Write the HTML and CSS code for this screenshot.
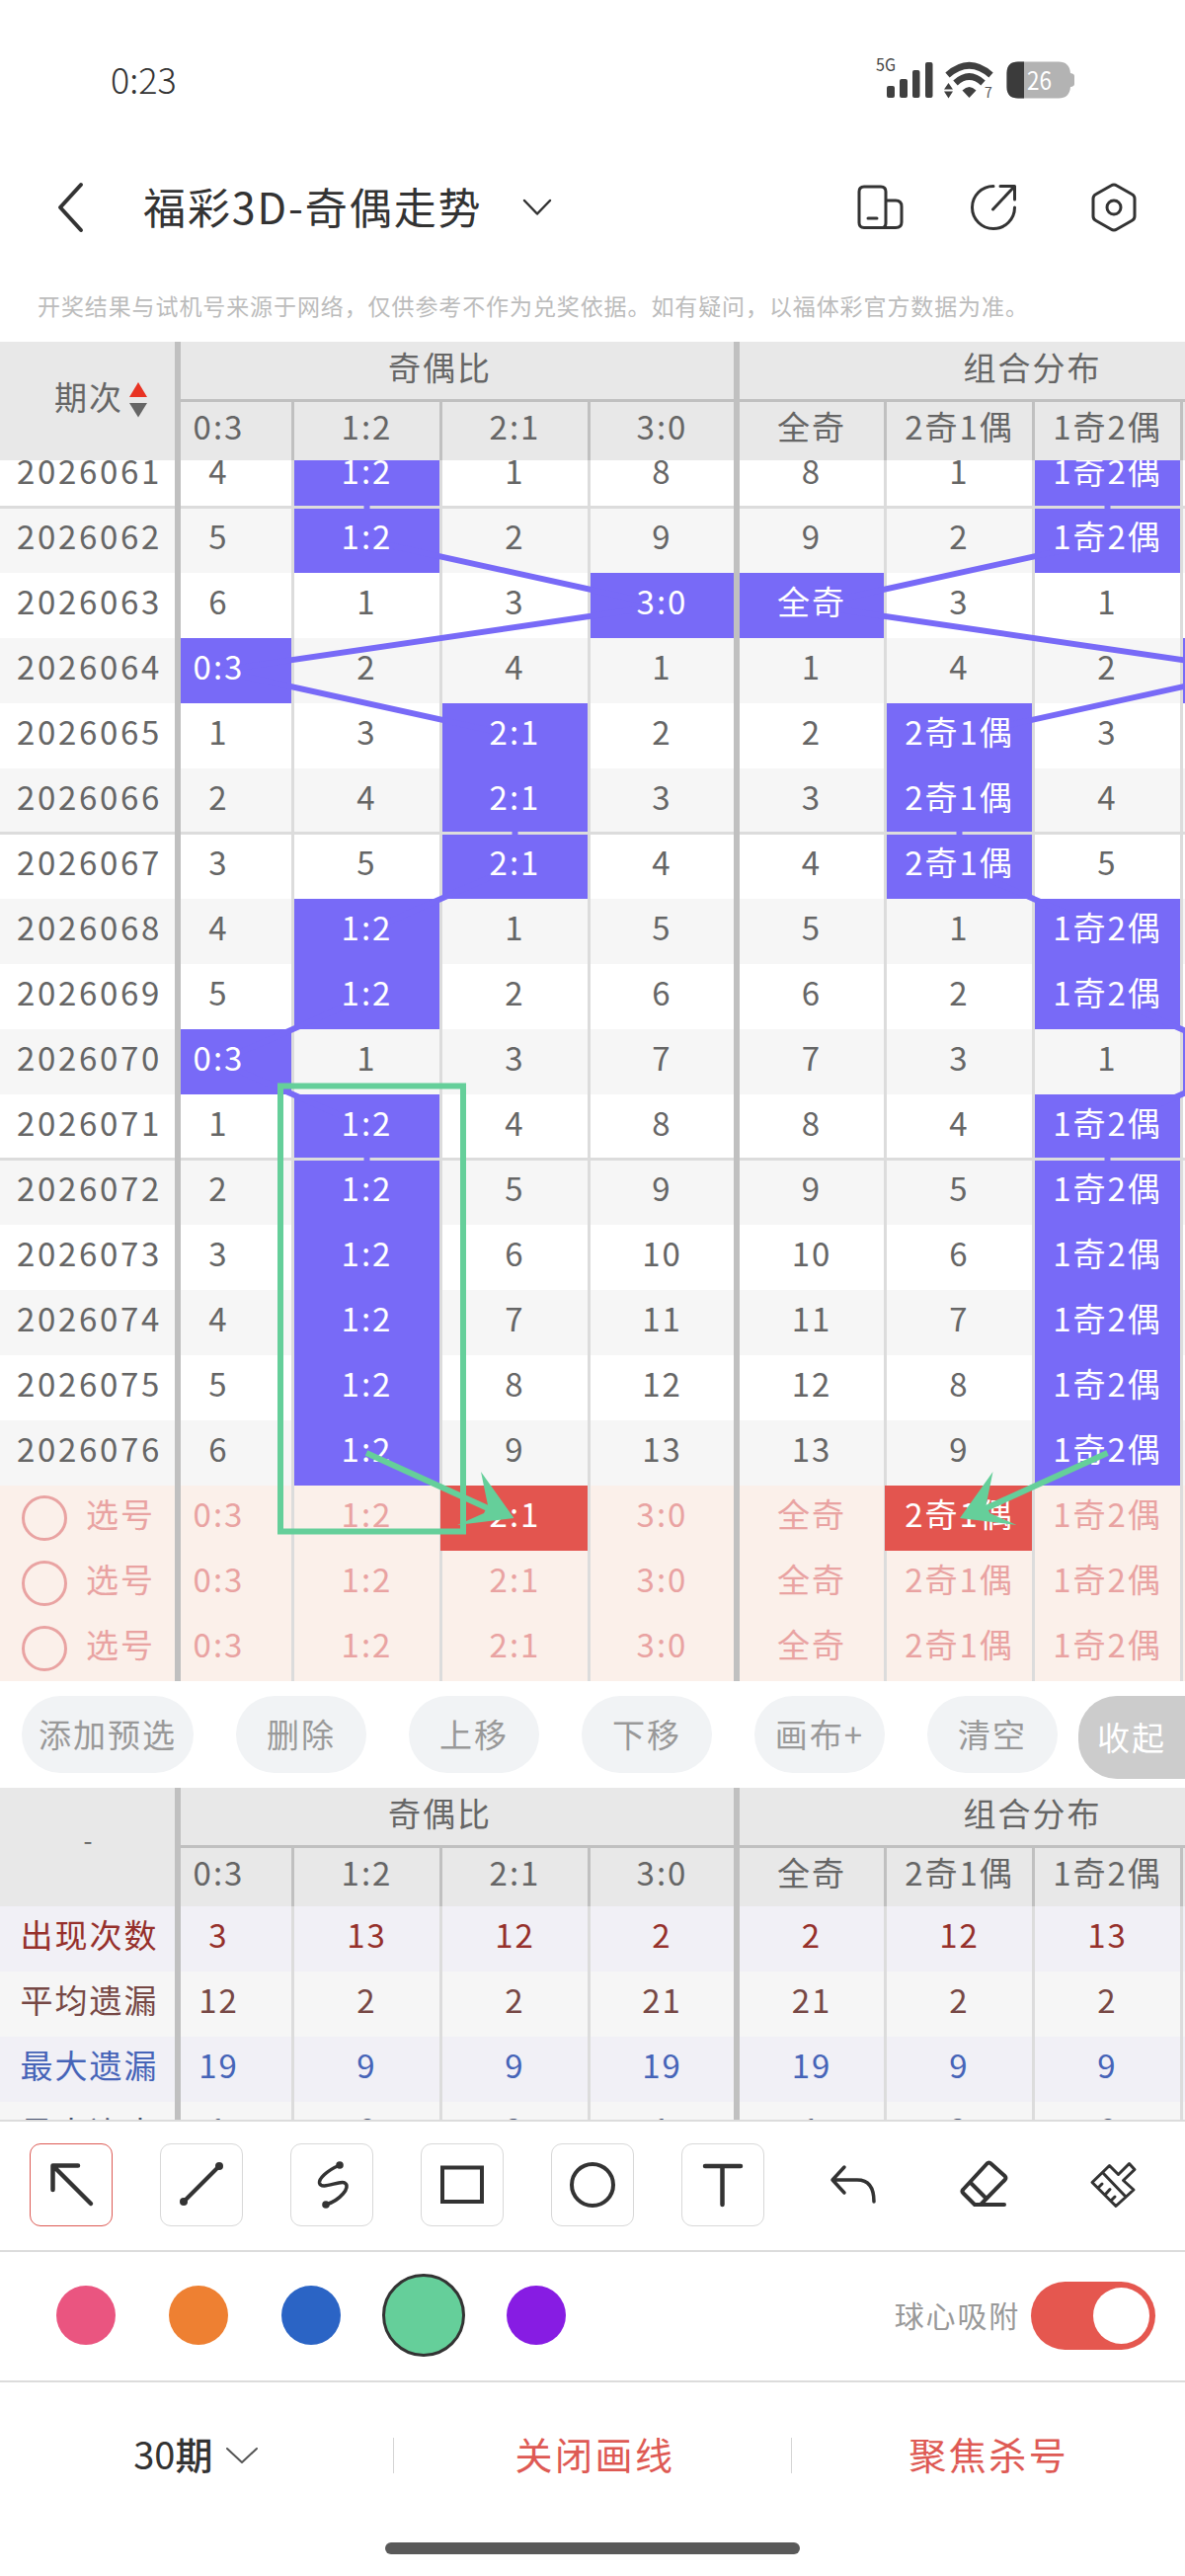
FILE: index.html
```html
<!DOCTYPE html>
<html lang="zh-CN">
<head>
    <meta charset="UTF-8">
    <meta name="viewport" content="width=device-width, initial-scale=1.0">
    <title>福彩3D-奇偶走势</title>
    <link rel="stylesheet" href="styles.css">
</head>
<body>
    <div class="status-bar">
        <span class="clock">0:23</span>
        <svg class="status-icons" width="210" height="60" viewBox="880 51 210 60">
            <text x="887" y="72" font-size="17" textLength="20" lengthAdjust="spacingAndGlyphs" fill="#444">5G</text>
            <g fill="#404040">
                <rect x="898" y="87" width="8" height="12" rx="2"/>
                <rect x="911" y="80" width="8" height="19" rx="2"/>
                <rect x="924" y="71" width="7.5" height="28" rx="2"/>
                <rect x="937" y="63" width="7.5" height="36" rx="2"/>
                <path d="M981.500 99 L974.500 91.500 Q981.500 84.500 988.500 91.500Z"/>
                <path d="M956 90.500 L960.500 84 L965 90.500Z M956 92.500 H965 L960.500 99.500Z"/>
            </g>
            <g fill="none" stroke="#404040" stroke-width="6.500" stroke-linecap="butt">
                <path d="M959.500 76 Q981.500 56.500 1003.500 76"/>
                <path d="M967.500 84 Q981.500 71 995.500 84"/>
            </g>
            <text x="997" y="99" font-size="14" fill="#555">7</text>
            <path fill="#b3b3b3" d="M1031 62.500 H1072 Q1083 62.500 1084 74 Q1088 74.500 1088 77 V85 Q1088 87.500 1084 88 Q1083 99.500 1072 99.500 H1031 Q1019.500 99.500 1019.500 88 V74 Q1019.500 62.500 1031 62.500Z"/>
            <path fill="#3b3b3b" d="M1037 62.500 V99.500 H1031 Q1019.500 99.500 1019.500 88 V74 Q1019.500 62.500 1031 62.500Z"/>
            <text x="1040" y="90.500" font-size="25" textLength="25" lengthAdjust="spacingAndGlyphs" fill="#fff">26</text>
        </svg>
    </div>

    <div class="title-bar">
        <svg class="back" width="28" height="52" viewBox="0 0 28 52"><path d="M25 3 L4 26 L25 49"/></svg>
        <h1>福彩3D-奇偶走势</h1>
        <svg class="arrow" width="30" height="18" viewBox="0 0 30 18"><path d="M2 2 L15 15.500 L28 2"/></svg>
        <div class="title-actions">
            <svg width="50" height="50" viewBox="0 0 50 50">
                <path d="M8 4 H25 Q30 4 30 9 V41 Q30 45 27 45.500 H8 Q3 45.500 3 40.500 V9 Q3 4 8 4Z M30 18 H40 Q46 18 46 24 V40 Q46 45.500 40 45.500 H26"/>
                <path d="M12 36 H21"/>
            </svg>
            <svg width="50" height="50" viewBox="0 0 50 50">
                <path d="M25 3.500 A21.500 21.500 0 1 0 46.500 25"/>
                <path d="M32 3.500 H46.500 V17 M46 4 L24.500 27"/>
            </svg>
            <svg width="50" height="50" viewBox="0 0 50 50">
                <path d="M22 3 Q25 1 28 3 L43 11.500 Q46 13 46 16 V34 Q46 37 43 38.500 L28 47 Q25 49 22 47 L7 38.500 Q4 37 4 34 V16 Q4 13 7 11.500Z"/>
                <circle cx="25" cy="25" r="7"/>
            </svg>
        </div>
    </div>
    <p class="notice">开奖结果与试机号来源于网络，仅供参考不作为兑奖依据。如有疑问，以福体彩官方数据为准。</p>

    <section class="chart">
        <div class="table">
            <div class="side">
                <div class="side-head">期次
                    <svg width="18" height="36" viewBox="0 0 18 36"><path fill="#e83323" d="M9 0 L18 15 H0Z"/><path fill="#666" d="M0 21 H18 L9 35.500Z"/></svg>
                </div>
                <div class="viewport"><div class="rows" id="periods"></div></div>
                <div class="picks">
                    <div class="pick"><i></i>选号</div>
                    <div class="pick"><i></i>选号</div>
                    <div class="pick"><i></i>选号</div>
                </div>
            </div>
            <div class="pane">
                <div class="sheet">
                    <div class="head"></div>
                    <div class="viewport">
                        <div class="rows" id="trend"></div>
                    </div>
                    <div id="picks"></div>
                </div>
            </div>
        </div>
        <!-- 用户画线 -->
        <svg class="drawing" width="1200" height="1356" viewBox="0 346 1200 1356">
            <rect x="284" y="1099.500" width="185" height="451"/>
            <path d="M371 1471 L494 1527 M1121.500 1471 L998.500 1527"/>
            <path class="tip" d="M520.500 1537 L487 1490 L494 1524 L490 1532 L463 1544Z"/>
            <path class="tip" d="M972 1537 L1005.500 1490 L998.500 1524 L1002.500 1532 L1029.500 1544Z"/>
        </svg>
    </section>

    <div class="actions">
        <button class="wide">添加预选</button>
        <button>删除</button>
        <button>上移</button>
        <button>下移</button>
        <button>画布+</button>
        <button>清空</button>
        <button class="fold">收起</button>
    </div>

    <section class="stats">
        <div class="table">
            <div class="side">
                <div class="side-head">-</div>
                <div id="stat-names"></div>
            </div>
            <div class="pane">
                <div class="sheet">
                    <div class="head"></div>
                    <div id="stats"></div>
                </div>
            </div>
        </div>
    </section>

    <div class="tools">
        <div class="tool active"><svg viewBox="0 0 84 84"><path stroke-width="4.500" d="M62 61 L24 23 M49 22.500 H23.500 V47"/></svg></div>
        <div class="tool"><svg viewBox="0 0 84 84"><path d="M24 59 L60 23"/><circle class="dot" cx="24" cy="59" r="4"/><circle class="dot" cx="60" cy="23" r="4"/></svg></div>
        <div class="tool"><svg viewBox="0 0 84 84"><path stroke-width="3.500" d="M50 22 C36 28 29 36 29.500 40 C31 48 50 37 55 40 C62 44 50 58 36 62"/><circle class="dot" cx="50" cy="22" r="3.800"/><circle class="dot" cx="36" cy="62" r="3.800"/></svg></div>
        <div class="tool"><svg viewBox="0 0 84 84"><path stroke-linejoin="miter" d="M22 24.500 H62 V59 H22Z"/></svg></div>
        <div class="tool"><svg viewBox="0 0 84 84"><circle cx="42" cy="42" r="21"/></svg></div>
        <div class="tool"><svg viewBox="0 0 84 84"><path stroke-width="4.500" d="M24 23 H60 M41.500 23 V62"/></svg></div>
        <div class="tool plain"><svg viewBox="0 0 84 84"><path stroke-width="3.500" d="M33 24 L21 37 L33 50 M21 37 H46 Q63 37 63 59"/></svg></div>
        <div class="tool plain"><svg viewBox="3 0 84 84"><path d="M48.500 20.500 Q50.500 18.500 52.500 20.500 L66.500 33 Q68.500 35 66.500 37 L42 62 H36 L24.500 50.500 Q22.500 48.500 24.500 46.500Z M32 40 L47 55 M37 62 H66"/></svg></div>
        <div class="tool plain"><svg viewBox="0 0 84 84"><path stroke-width="3" d="M20 39.500 L37.500 22.500 L46.500 31.500 L57.500 20.500 L63 26.500 L51.500 37.500 L62 47 L44 63.500Z M31 30 L53.500 53.500 M26 45 L30 41 M33.500 51.500 L38 46.500 M39.500 57.500 L43 54"/></svg></div>
    </div>

    <div class="colors">
        <span class="swatch pink"></span>
        <span class="swatch orange"></span>
        <span class="swatch blue"></span>
        <span class="swatch green selected"></span>
        <span class="swatch purple"></span>
        <span class="snap">球心吸附</span>
        <span class="toggle"></span>
    </div>

    <div class="footer">
        <div class="tab period"><span>30</span><b>期</b><svg width="34" height="18" viewBox="0 0 34 18"><path d="M2 2 L17 16 L32 2"/></svg></div>
        <div class="tab"><span>关闭画线</span></div>
        <div class="tab"><span>聚焦杀号</span></div>
    </div>
    <div class="home-indicator"></div>

    <script src="script.js"></script>
</body>
</html>
```
FILE: styles.css
```css
* {
    box-sizing: border-box;
}

body {
    margin: 0;
    width: 1200px;
    height: 2608px;
    overflow: hidden;
    background-color: #fff;
    color: #333;
    font-family: "Noto Sans CJK SC", sans-serif;
    font-size: 33px;
    font-weight: 400;
}

svg {
    display: block;
    fill: none;
    stroke-linecap: round;
    stroke-linejoin: round;
}

.status-bar {
    height: 160px;
    display: flex;
    justify-content: space-between;
    align-items: center;
    padding: 0 110px 0 112px;
}

.clock {
    margin-top: -3px;
    font-size: 36px;
    font-weight: 300;
    color: #333;
}

.status-icons {
    margin-top: 2px;
}

.title-bar {
    height: 100px;
    display: flex;
    align-items: center;
    padding: 0 47px 0 57px;
}

.title-bar svg {
    stroke: #333;
    stroke-width: 3;
}

.title-bar .back {
    stroke-width: 4;
}

.title-bar .arrow {
    stroke-width: 2.5;
    margin-left: 42px;
}

h1 {
    width: 342px;
    margin: -4px 0 0 60px;
    font-size: 43px;
    font-weight: 400;
    letter-spacing: 1.9px;
    line-height: 60px;
    white-space: nowrap;
}

.title-actions {
    display: flex;
    gap: 64px;
    margin-left: auto;
}

.title-actions svg:last-child {
    margin-left: 8px;
}

.notice {
    height: 86px;
    margin: 0;
    padding-left: 38px;
    font-size: 23px;
    letter-spacing: 0.9px;
    line-height: 99px;
    color: #bcbcbc;
    white-space: nowrap;
}

/* 走势表 */
.chart {
    position: relative;
    height: 1356px;
}

.table {
    display: flex;
    color: #666;
    letter-spacing: 2px;
}

.side {
    width: 183px;
    flex: none;
    border-right: 6px solid #c0c0c0;
}

.side-head {
    height: 120px;
    display: flex;
    align-items: center;
    justify-content: center;
    gap: 6px;
    padding: 0 0 10px 27px;
    background-color: #e8e8e8;
}

.side-head svg {
    margin-top: 8px;
}

.stats .side-head {
    padding: 0 0 18px 3px;
    font-size: 26px;
}

.pane {
    flex: 1;
    overflow: hidden;
}

.sheet {
    width: 1200px;
    margin-left: -35px;
}

.head,
.row {
    display: grid;
    grid-template-columns: 150px 150px 150px 151px 149px 150px 150px 150px;
}

.head {
    grid-template-rows: 61px 59px;
    background-color: #e8e8e8;
}

.head .group {
    grid-column: span 4;
    padding-bottom: 8px;
    border-bottom: 3px solid #c0c0c0;
    border-right: 6px solid #c0c0c0;
}

.head .cell {
    padding-bottom: 12px;
    border-color: #c0c0c0;
}

.cell,
.group {
    display: flex;
    align-items: center;
    justify-content: center;
    padding-bottom: 11px;
    border-right: 3px solid #dcdcdc;
    white-space: nowrap;
}

.cell:nth-child(4),
.head .cell:nth-child(6) {
    border-right: 6px solid #c0c0c0;
}

.head .cell:nth-child(4) {
    border-right: 3px solid #c0c0c0;
}

.viewport {
    height: 1038px;
    overflow: hidden;
}

.rows {
    position: relative;
    margin-top: -18px;
}

.row {
    height: 66px;
}

.rows .row:nth-child(even) {
    background-color: #f6f6f6;
}

.side .row {
    display: flex;
    align-items: center;
    justify-content: center;
    padding: 0 0 11px 4px;
}

#periods {
    letter-spacing: 2.7px;
}

.row span {
    position: relative;
    z-index: 2;
}

.pane .mark .cell,
.side .mark {
    box-shadow: inset 0 -2px #dcdcdc;
}

.pane .mark + .row .cell,
.side .mark + .row {
    box-shadow: inset 0 1px #dcdcdc;
}

.cell.hit {
    background-color: #786af7;
    background-clip: padding-box;
    color: #fff;
}

.links {
    position: absolute;
    left: 0;
    top: 0;
    z-index: 1;
    stroke: #786af7;
    stroke-width: 6;
}

.pick,
#picks .row {
    height: 66px;
    background-color: #fbf0ea;
    color: #e9a3a2;
}

.pick {
    display: flex;
    align-items: center;
    padding: 0 0 11px 22px;
}

.pick i {
    width: 46px;
    height: 46px;
    margin: 11px 19px 0 0;
    border: 3px solid #e9a3a2;
    border-radius: 50%;
}

#picks .chosen {
    background-color: #e3554f;
    background-clip: padding-box;
    box-shadow: -2px 0 #e3554f;
    color: #fff;
}

.drawing {
    position: absolute;
    left: 0;
    top: 0;
    z-index: 3;
    stroke: #65cf9a;
    stroke-width: 6;
    stroke-linecap: butt;
    stroke-linejoin: miter;
}

.drawing .tip {
    fill: #65cf9a;
    stroke: none;
}

.actions {
    height: 108px;
    display: flex;
    gap: 43px;
    padding: 15px 0 0 22px;
    overflow: hidden;
}

button {
    flex: none;
    width: 132px;
    height: 78px;
    padding: 0 0 2px;
    border: none;
    border-radius: 39px;
    background-color: #f1f3f5;
    color: #999;
    font-family: inherit;
    font-size: 33px;
    letter-spacing: 2px;
    white-space: nowrap;
}

button.wide {
    width: 174px;
}

button.fold {
    width: 150px;
    height: 84px;
    margin-left: -22px;
    padding-right: 42px;
    background-color: #ccc;
    color: #fff;
}

/* 统计 */
.stats {
    height: 338px;
    overflow: hidden;
    border-bottom: 2px solid #dcdcdc;
}

.stats .row {
    background-color: #f6f6f6;
}

.stats .row:nth-child(odd) {
    background-color: #f1f0f6;
}

.stats .count {
    color: #96302b;
}

.stats .average {
    color: #764845;
}

.stats .longest {
    color: #4664b8;
}

.stats .streak {
    color: #46506e;
}

.stats .streak,
.stats .streak .cell {
    padding-bottom: 6px;
}

.tools {
    height: 132px;
    display: flex;
    gap: 48px;
    padding: 22px 30px 0;
    border-bottom: 2px solid #dcdcdc;
}

.tool {
    width: 84px;
    height: 84px;
    border: 1.5px solid #d8d8d8;
    border-radius: 11px;
}

.tool.active {
    border-color: #dd5a54;
}

.tool.plain {
    border-color: transparent;
}

.tool svg {
    margin: -1px;
    width: 84px;
    height: 84px;
    stroke: #333;
    stroke-width: 4;
}

.tool .dot {
    fill: #333;
    stroke: none;
}

.colors {
    height: 132px;
    display: flex;
    align-items: center;
    gap: 54px;
    padding: 0 30px 2px 57px;
    border-bottom: 2px solid #dcdcdc;
}

.swatch {
    width: 60px;
    height: 60px;
    border-radius: 50%;
}

.swatch.selected {
    width: 84px;
    height: 84px;
    margin: 0 -12px;
    border: 3px solid #333;
}

.pink { background-color: #ea5580; }
.orange { background-color: #ee8032; }
.blue { background-color: #2b64c5; }
.green { background-color: #65cf9a; }
.purple { background-color: #871ce3; }

.snap {
    margin: -3px -43px 0 auto;
    font-size: 30px;
    letter-spacing: 1.8px;
    color: #999;
}

.toggle {
    width: 126px;
    height: 69px;
    padding: 6px;
    border-radius: 35px;
    background-color: #e5574f;
}

.toggle::after {
    content: "";
    display: block;
    width: 57px;
    height: 57px;
    margin-left: auto;
    border-radius: 50%;
    background-color: #fff;
}

.footer {
    height: 147px;
    display: flex;
    align-items: center;
}

.tab {
    flex: 1;
    height: 36px;
    display: flex;
    align-items: center;
    justify-content: center;
    padding-left: 5px;
    border-left: 1px solid #d5d5d5;
    color: #de5a54;
    font-size: 38px;
    letter-spacing: 2.5px;
}

.tab:last-child {
    padding-left: 0;
}

.tab span,
.tab b {
    margin-top: -5px;
}

.tab.period {
    padding: 0;
    border: none;
    color: #333;
    letter-spacing: 0;
}

.tab b {
    font-weight: 500;
}

.tab svg {
    margin-left: 13px;
    stroke: #555;
    stroke-width: 2;
}

.home-indicator {
    width: 420px;
    height: 12px;
    margin: 15px auto 0;
    border-radius: 6px;
    background-color: #595959;
}
```
FILE: script.js
```js
const names = ["0:3", "1:2", "2:1", "3:0", "全奇", "2奇1偶", "1奇2偶", ""];

// values per period, and the two columns that were hit
const periods = [
    ["2026061", [4, 0, 1, 8, 8, 1, 0, ""], 1, 6],
    ["2026062", [5, 0, 2, 9, 9, 2, 0, ""], 1, 6],
    ["2026063", [6, 1, 3, 0, 0, 3, 1, ""], 3, 4],
    ["2026064", [0, 2, 4, 1, 1, 4, 2, ""], 0, 7],
    ["2026065", [1, 3, 0, 2, 2, 0, 3, ""], 2, 5],
    ["2026066", [2, 4, 0, 3, 3, 0, 4, ""], 2, 5],
    ["2026067", [3, 5, 0, 4, 4, 0, 5, ""], 2, 5],
    ["2026068", [4, 0, 1, 5, 5, 1, 0, ""], 1, 6],
    ["2026069", [5, 0, 2, 6, 6, 2, 0, ""], 1, 6],
    ["2026070", [0, 1, 3, 7, 7, 3, 1, ""], 0, 7],
    ["2026071", [1, 0, 4, 8, 8, 4, 0, ""], 1, 6],
    ["2026072", [2, 0, 5, 9, 9, 5, 0, ""], 1, 6],
    ["2026073", [3, 0, 6, 10, 10, 6, 0, ""], 1, 6],
    ["2026074", [4, 0, 7, 11, 11, 7, 0, ""], 1, 6],
    ["2026075", [5, 0, 8, 12, 12, 8, 0, ""], 1, 6],
    ["2026076", [6, 0, 9, 13, 13, 9, 0, ""], 1, 6]
];

const stats = [
    ["count", "出现次数", [3, 13, 12, 2, 2, 12, 13, ""]],
    ["average", "平均遗漏", [12, 2, 2, 21, 21, 2, 2, ""]],
    ["longest", "最大遗漏", [19, 9, 9, 19, 19, 9, 9, ""]],
    ["streak", "最大连出", [1, 6, 3, 1, 1, 3, 6, ""]]
];

const cell = (text, cls = "") => `<div class="cell ${cls}"><span>${text}</span></div>`;
const row = (cells, cls = "") => `<div class="row ${cls}">${cells}</div>`;
const mark = (i) => (i % 5 === 0 && i < 15 ? "mark" : "");

document.querySelectorAll(".head").forEach((head) => {
    head.innerHTML = `<div class="group">奇偶比</div><div class="group">组合分布</div>` +
        names.map((n) => cell(n)).join("");
});

document.querySelector("#periods").innerHTML =
    periods.map((p, i) => row(`<span>${p[0]}</span>`, mark(i))).join("");

// broken line through the hit cells of one group
const line = (k) => {
    const points = periods.map((p, i) => `${73.5 + p[k] * 150},${33 + i * 66}`).join(" ");
    return `<polyline points="${points}"/>`;
};

document.querySelector("#trend").innerHTML =
    periods.map((p, i) => row(p[1].map((v, c) => {
        const hit = c === p[2] || c === p[3];
        return cell(hit ? names[c] : v, hit ? "hit" : "");
    }).join(""), mark(i))).join("") +
    `<svg class="links" width="1200" height="1056">${line(2)}${line(3)}</svg>`;

document.querySelector("#picks").innerHTML = [0, 1, 2].map((i) =>
    row(names.map((n, c) => cell(n, i === 0 && (c === 2 || c === 5) ? "chosen" : "")).join(""))
).join("");

document.querySelector("#stat-names").innerHTML =
    stats.map((s) => row(`<span>${s[1]}</span>`, s[0])).join("");
document.querySelector("#stats").innerHTML =
    stats.map((s) => row(s[2].map((v) => cell(v)).join(""), s[0])).join("");
```
